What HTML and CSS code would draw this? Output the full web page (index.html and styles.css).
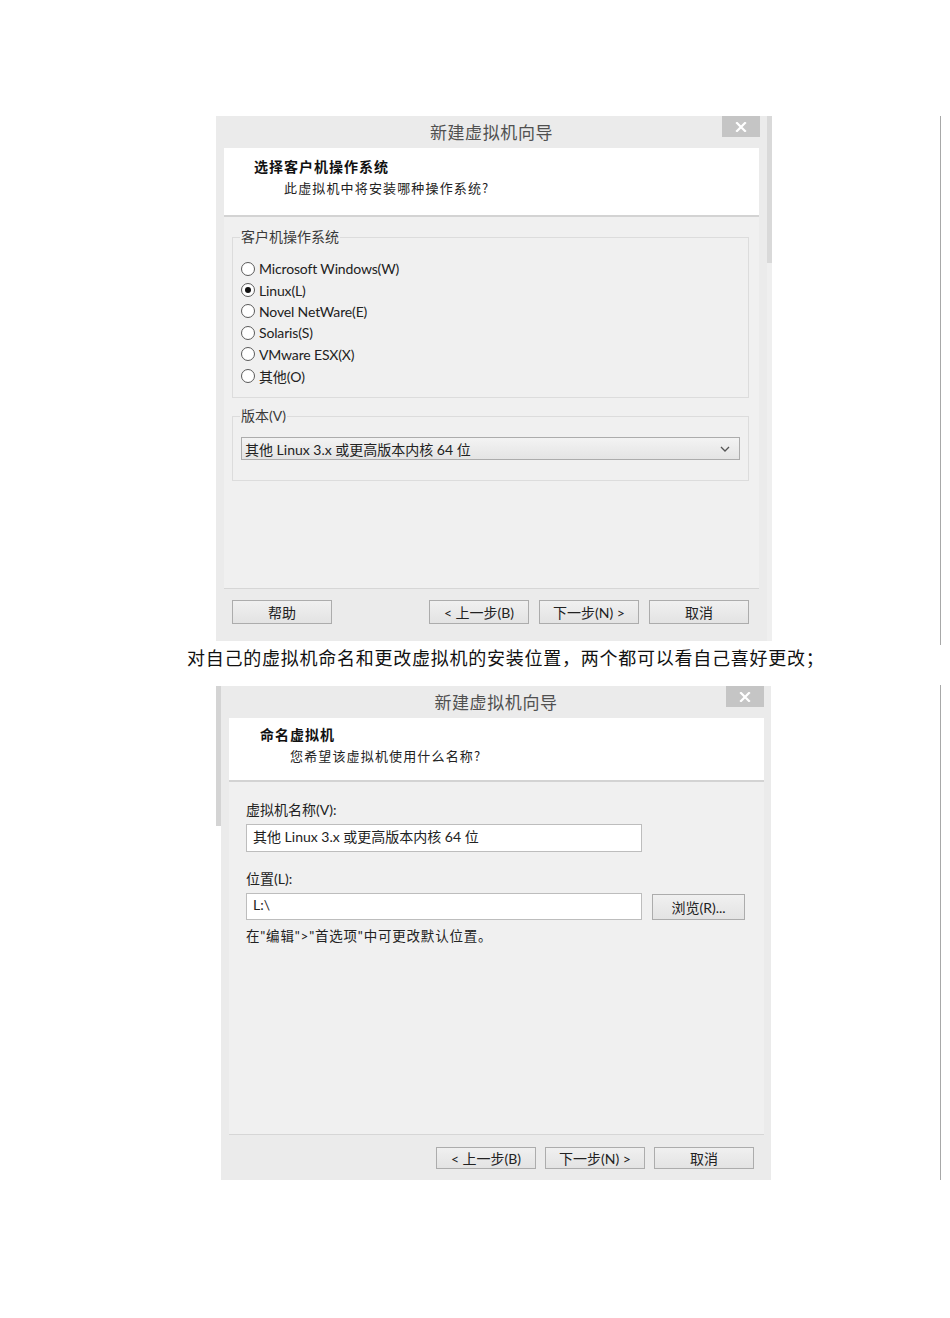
FILE: index.html
```html
<!DOCTYPE html>
<html lang="zh-CN">
<head>
<meta charset="utf-8">
<title>新建虚拟机向导</title>
<link rel="stylesheet" href="styles.css">
</head>
<body>
<main class="page">

  <section class="figure figure-os">
    <div class="dialog dialog-os">
      <div class="titlebar">
        <span class="title">新建虚拟机向导</span>
        <span class="close"><svg width="12" height="10" viewBox="0 0 12 10"><path d="M2 1 L10 9 M10 1 L2 9" stroke="#fff" stroke-width="2.2" stroke-linecap="square"/></svg></span>
      </div>
      <div class="inner">
        <div class="header">
          <div class="h-title">选择客户机操作系统</div>
          <div class="h-sub">此虚拟机中将安装哪种操作系统?</div>
        </div>
        <div class="body body-os">
          <fieldset class="group group-os">
            <legend>客户机操作系统</legend>
            <ul class="radios">
              <li><span class="radio"></span>Microsoft Windows(W)</li>
              <li><span class="radio checked"></span>Linux(L)</li>
              <li><span class="radio"></span>Novel NetWare(E)</li>
              <li><span class="radio"></span>Solaris(S)</li>
              <li><span class="radio"></span>VMware ESX(X)</li>
              <li><span class="radio"></span>其他(O)</li>
            </ul>
          </fieldset>
          <fieldset class="group group-ver">
            <legend>版本(V)</legend>
            <div class="select">
              <span>其他 Linux 3.x 或更高版本内核 64 位</span>
              <svg width="10" height="6" viewBox="0 0 10 6"><path d="M1 1 L5 5 L9 1" fill="none" stroke="#555" stroke-width="1.3"/></svg>
            </div>
          </fieldset>
        </div>
        <div class="footer">
          <button class="btn">帮助</button>
          <span class="spacer"></span>
          <button class="btn">&lt; 上一步(B)</button>
          <button class="btn">下一步(N) &gt;</button>
          <button class="btn">取消</button>
        </div>
      </div>
    </div>
    <div class="scrollbar"><div class="thumb"></div></div>
  </section>

  <p class="caption">对自己的虚拟机命名和更改虚拟机的安装位置，两个都可以看自己喜好更改；</p>

  <section class="figure figure-name">
    <div class="edge"></div>
    <div class="dialog dialog-name">
      <div class="titlebar">
        <span class="title">新建虚拟机向导</span>
        <span class="close"><svg width="12" height="10" viewBox="0 0 12 10"><path d="M2 1 L10 9 M10 1 L2 9" stroke="#fff" stroke-width="2.2" stroke-linecap="square"/></svg></span>
      </div>
      <div class="inner">
        <div class="header">
          <div class="h-title">命名虚拟机</div>
          <div class="h-sub">您希望该虚拟机使用什么名称?</div>
        </div>
        <div class="body body-name">
          <label class="field-label">虚拟机名称(V):</label>
          <div class="input input-name">其他 Linux 3.x 或更高版本内核 64 位</div>
          <label class="field-label second">位置(L):</label>
          <div class="row">
            <div class="input input-loc">L:\</div>
            <button class="btn btn-browse">浏览(R)...</button>
          </div>
          <div class="hint">在"编辑"&gt;"首选项"中可更改默认位置。</div>
        </div>
        <div class="footer">
          <span class="spacer"></span>
          <button class="btn">&lt; 上一步(B)</button>
          <button class="btn">下一步(N) &gt;</button>
          <button class="btn">取消</button>
        </div>
      </div>
    </div>
  </section>

</main>
</body>
</html>
```

FILE: styles.css
```css
* { box-sizing: border-box; }

html, body {
  margin: 0;
  background: #fff;
}

.page {
  padding-top: 116px;
  font-family: "Lato", "Noto Sans CJK SC", sans-serif;
  font-size: 14px;
  color: #222;
}

/* each screenshot block sits in a row with a rule on its right side */
.figure {
  display: flex;
  align-items: flex-start;
  width: 941px;
  border-right: 1px solid #a8a8a8;
}

.figure-os {
  height: 529px;
  padding-left: 216px;
}

.figure-name {
  height: 495px;
  padding-left: 216px;
  padding-top: 1px;
}

.edge {
  width: 5px;
  height: 140px;
  background: #d4d4d4;
}

.scrollbar {
  width: 5px;
  height: 525px;
  background: #efefef;
}

.scrollbar .thumb {
  height: 147px;
  background: #d9d9d9;
}

.caption {
  margin: 0;
  height: 40px;
  padding-left: 187px;
  line-height: 24px;
  font-family: "Noto Sans CJK SC", sans-serif;
  font-size: 18px;
  letter-spacing: 0.75px;
  color: #111;
}

/* wizard window */
.dialog {
  background: #ebebeb;
  display: flex;
  flex-direction: column;
}

.dialog-os {
  width: 551px;
  height: 525px;
}

.dialog-name {
  width: 550px;
  height: 494px;
}

.titlebar {
  position: relative;
  height: 32px;
  line-height: 32px;
  text-align: center;
}

.titlebar .title {
  font-family: "Noto Sans CJK SC", sans-serif;
  font-size: 17px;
  color: #505050;
  letter-spacing: 0.6px;
}

.close {
  position: absolute;
  top: 0;
  right: 7px;
  width: 38px;
  height: 21px;
  background: #c5c5c5;
  display: flex;
  align-items: center;
  justify-content: center;
}

.inner {
  margin: 0 8px;
  flex: 1;
  display: flex;
  flex-direction: column;
}

.dialog-os .inner { margin-bottom: 8px; }
.dialog-name .inner { margin-right: 7px; }

.header {
  background: #fff;
  padding-top: 8px;
  padding-left: 30px;
  border-bottom: 2px solid #d3d3d3;
  height: 69px;
}

.dialog-name .header {
  height: 64px;
  padding-top: 6px;
  padding-left: 31px;
}

.h-title {
  font-family: "Noto Sans CJK SC", sans-serif;
  font-weight: 700;
  font-size: 14px;
  line-height: 20px;
  letter-spacing: 1px;
  color: #111;
}

.h-sub {
  margin-top: 2px;
  padding-left: 30px;
  font-family: "Noto Sans CJK SC", sans-serif;
  font-size: 13px;
  line-height: 20px;
  letter-spacing: 1.15px;
  color: #222;
}

.body {
  background: #f0f0f0;
  border-bottom: 1px solid #d6d6d6;
}

.body-os {
  height: 372px;
  padding: 11px 10px 0 8px;
}

.body-name {
  height: 353px;
  padding: 19px 0 0 17px;
}

/* group boxes */
.group {
  margin: 0;
  padding: 0 8px 11px 8px;
  border: 1px solid #dcdcdc;
  min-width: 0;
}

.group legend {
  padding: 0 1px;
  margin-left: -1px;
  line-height: 18px;
  font-size: 14px;
  color: #3a3a3a;
}

.group-ver {
  margin-top: 9px;
  padding-bottom: 20px;
}

.radios {
  list-style: none;
  margin: 0;
  padding: 12px 0 0 0;
}

.radios li {
  height: 21.4px;
  display: flex;
  align-items: center;
  font-size: 14px;
  letter-spacing: -0.15px;
  color: #222;
}

.radio {
  width: 14px;
  height: 14px;
  border: 1px solid #5a5a5a;
  border-radius: 50%;
  background: #fff;
  margin-right: 4px;
  display: flex;
  align-items: center;
  justify-content: center;
}

.radio.checked::after {
  content: "";
  width: 6px;
  height: 6px;
  border-radius: 50%;
  background: #111;
}

.group-ver .select {
  margin-top: 12px;
  margin-right: 0;
  height: 23px;
  border: 1px solid #acacac;
  background: linear-gradient(#f3f3f3, #e4e4e4);
  display: flex;
  align-items: center;
  justify-content: space-between;
  padding: 0 9px 0 3px;
  font-size: 14px;
  color: #222;
}

/* buttons */
.footer {
  display: flex;
  gap: 10px;
  padding: 11px 10px 0 8px;
  flex: 1;
}

.spacer { flex: 1; }

.btn {
  width: 100px;
  height: 24px;
  padding: 0;
  border: 1px solid #acacac;
  background: linear-gradient(#f0f0f0, #e3e3e3);
  font-family: "Lato", "Noto Sans CJK SC", sans-serif;
  font-size: 14px;
  color: #222;
}

.dialog-name .footer {
  padding: 12px 10px 0 8px;
  gap: 9px;
}

.dialog-name .footer .btn {
  height: 22px;
}

/* name page fields */
.field-label {
  display: block;
  line-height: 18px;
  font-size: 14px;
  color: #222;
}

.field-label.second { margin-top: 18px; }

.input {
  margin-top: 5px;
  width: 396px;
  height: 28px;
  border: 1px solid #bdbdbd;
  background: #fff;
  padding: 3px 6px;
  font-size: 14px;
  line-height: 18px;
  color: #222;
}

.row {
  display: flex;
  align-items: flex-start;
  gap: 10px;
}

.input-loc {
  height: 27px;
  padding-top: 2px;
}

.btn-browse {
  margin-top: 6px;
  width: 93px;
  height: 26px;
}

.hint {
  margin-top: 7px;
  line-height: 18px;
  font-size: 13.5px;
  letter-spacing: 0.8px;
  color: #222;
}
```
